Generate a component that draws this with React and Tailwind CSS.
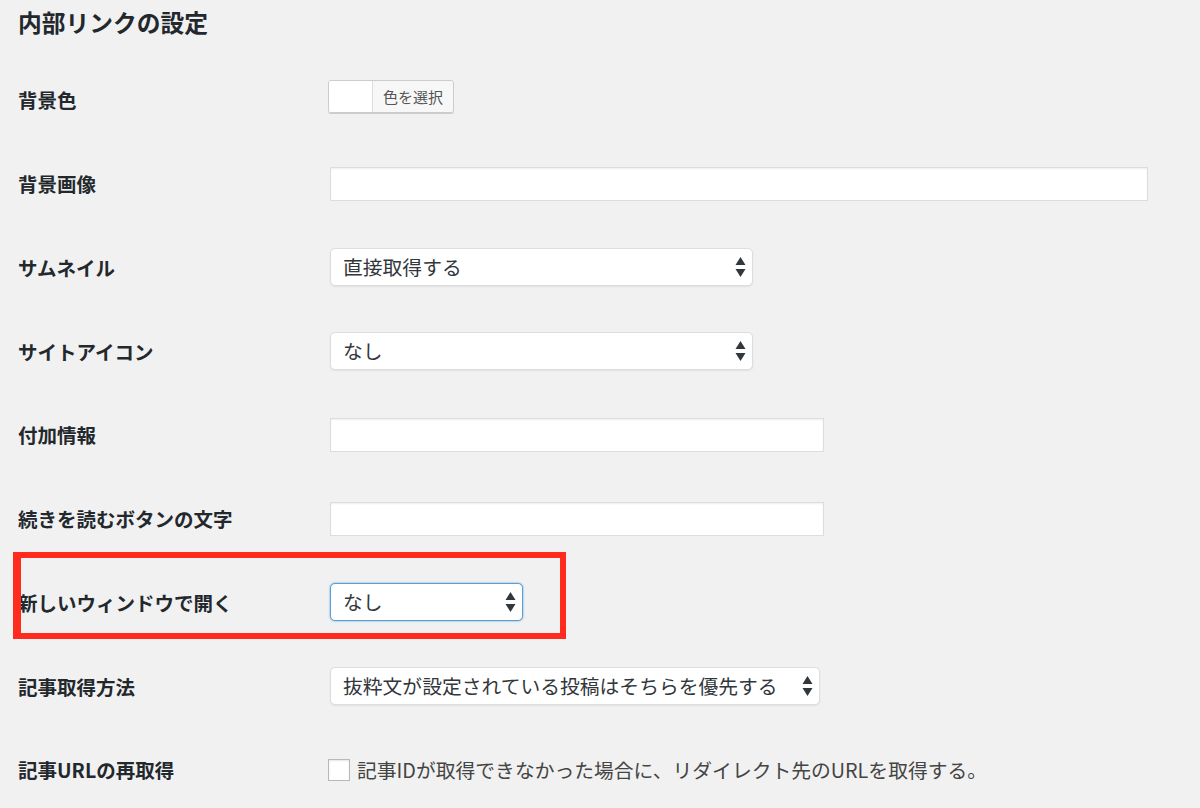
import React from 'react';

const font = { fontFamily: '"Noto Sans CJK JP", "Noto Sans", sans-serif' };

const Arrows = () => (
    <svg width="11" height="20" viewBox="0 0 11 20" className="shrink-0">
        <path d="M5.5 0 L10.5 8 L0.5 8 Z" fill="#32373c" />
        <path d="M0.5 12 L10.5 12 L5.5 20 Z" fill="#32373c" />
    </svg>
);

const Select = ({ value, className = '', focused = false }) => (
    <div
        className={
            'flex items-center justify-between h-[38px] pl-[12px] pr-[6px] bg-white rounded-[5px] text-[19.8px] text-[#32373c] ' +
            (focused
                ? 'border border-[#5b9dd9] shadow-[0_0_2px_rgba(30,140,190,0.8)] '
                : 'border border-[#dddddd] shadow-[0_1px_2px_rgba(0,0,0,0.07)] ') +
            className
        }
    >
        <span className="whitespace-nowrap leading-none">{value}</span>
        <Arrows />
    </div>
);

const TextInput = ({ className = '' }) => (
    <div className={'h-[34px] bg-white border border-[#dddddd] shadow-[inset_0_1px_2px_rgba(0,0,0,0.07)] ' + className}></div>
);

const Row = ({ label, children }) => (
    <div className="flex items-center h-[83.75px]">
        <div className="w-[312px] shrink-0 text-[19.5px] font-bold text-[#23282d] whitespace-nowrap">{label}</div>
        <div className="flex items-center">{children}</div>
    </div>
);

export default function App() {
    return (
        <div className="relative w-[1200px] h-[808px] bg-[#f1f1f1] pl-[18px] overflow-hidden" style={font}>
            <div className="h-[44px] flex items-center">
                <h2 className="text-[23.75px] font-bold text-[#23282d] leading-none">内部リンクの設定</h2>
            </div>
            <div className="mt-[14px]">
                <Row label="背景色">
                    <div className="-ml-[2px] -mt-[6px] flex h-[33px] rounded-[3px] border border-[#cccccc] shadow-[0_1px_0_#cccccc] overflow-hidden">
                        <div className="w-[44px] bg-white border-r border-[#dddddd]"></div>
                        <div className="w-[80px] bg-[#f7f7f7] flex items-center justify-center text-[15px] text-[#555555]">色を選択</div>
                    </div>
                </Row>
                <Row label="背景画像">
                    <TextInput className="w-[818px]" />
                </Row>
                <Row label="サムネイル">
                    <Select value="直接取得する" className="w-[423px]" />
                </Row>
                <Row label="サイトアイコン">
                    <Select value="なし" className="w-[423px]" />
                </Row>
                <Row label="付加情報">
                    <TextInput className="w-[494px]" />
                </Row>
                <Row label="続きを読むボタンの文字">
                    <TextInput className="w-[494px]" />
                </Row>
                <Row label="新しいウィンドウで開く">
                    <Select value="なし" className="w-[193px]" focused />
                </Row>
                <Row label="記事取得方法">
                    <Select value="抜粋文が設定されている投稿はそちらを優先する" className="w-[490px]" />
                </Row>
                <Row label="記事URLの再取得">
                    <label className="-ml-[2px] flex items-center gap-[7px] text-[19.8px] text-[#444444] whitespace-nowrap">
                        <span className="w-[22px] h-[22px] bg-white border border-[#b4b9be] shadow-[inset_0_1px_2px_rgba(0,0,0,0.1)]"></span>
                        記事IDが取得できなかった場合に、リダイレクト先のURLを取得する。
                    </label>
                </Row>
            </div>
            {/* annotation box */}
            <div className="absolute left-[13px] top-[552px] w-[553px] h-[87px] border-[6px] border-l-[8px] border-[#ff2b1c] pointer-events-none"></div>
        </div>
    );
}
